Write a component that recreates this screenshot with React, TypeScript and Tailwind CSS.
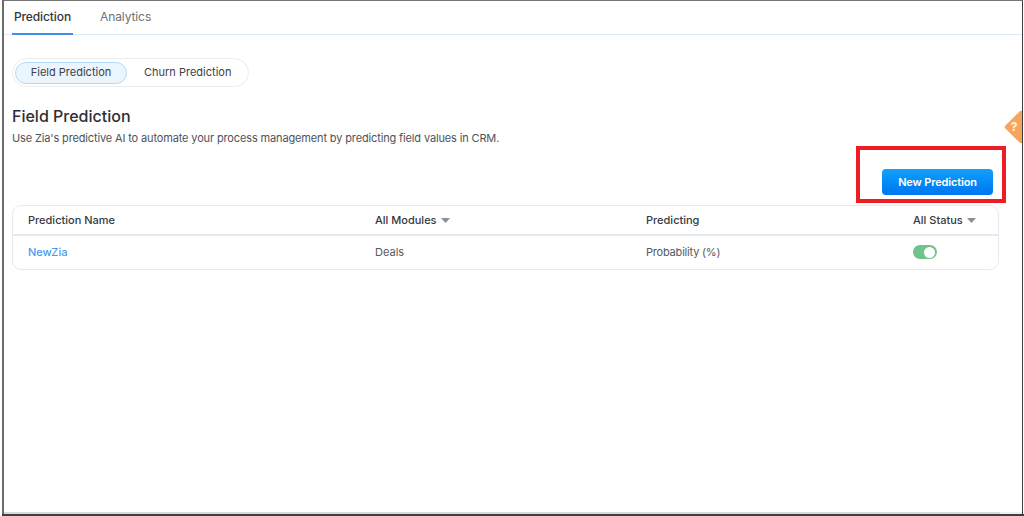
import React from "react";

function Caret() {
  return (
    <svg width="9" height="5" viewBox="0 0 9 5" className="ml-[4px]">
      <path d="M0 0h9L4.5 5z" fill="#8d8f94" />
    </svg>
  );
}

export default function App() {
  return (
    <div className="relative h-[516px] w-[1024px] overflow-hidden bg-white font-['Inter','Liberation_Sans',sans-serif]">
      <div className="ml-[2px] mr-[1px] flex h-[514px] flex-col border-l-2 border-r border-t border-l-[#6b6b6b] border-r-[#3c3c3c] border-t-[#777777]">
        <div className="flex h-[34px] items-stretch gap-[4px] border-b border-[#dfeaf5] pl-[8px] text-[12px] tracking-[-0.1px]">
          <div className="-mb-px flex w-[61px] items-center justify-center border-b-2 border-[#3f8fe8] font-medium text-[#333840]">
            Prediction
          </div>
          <div className="flex items-center pb-[2px] pl-[23px] text-[#6d7179]">Analytics</div>
        </div>

        <div className="flex flex-1 flex-col pl-[8px] pr-[23px] pt-[23px]">
          <div className="flex h-[29px] w-[237px] items-center rounded-full border border-[#e8edf3] pl-[2px] text-[11px] text-[#3c4048]">
            <div className="flex h-[22px] w-[112px] items-center justify-center rounded-full border border-[#b5daf7] bg-[#ebf5fe]">
              Field Prediction
            </div>
            <div className="ml-[17px]">Churn Prediction</div>
          </div>

          <h1 className="mt-[19px] text-[16px] font-medium leading-[20px] text-[#2c2f36]">Field Prediction</h1>
          <p className="mt-[4px] text-[11px] leading-[16px] tracking-[-0.14px] text-[#4e5259]">
            Use Zia's predictive AI to automate your process management by predicting field values in CRM.
          </p>

          <div className="mr-[6px] mt-[23px] flex justify-end">
            <button className="h-[26px] w-[111px] rounded-[4px] bg-gradient-to-b from-[#14a0fb] to-[#0075f0] text-[11px] font-semibold tracking-[-0.15px] text-white">
              New Prediction
            </button>
          </div>

          <div className="mt-[10px] rounded-[9px] border border-[#e6ebf1] text-[11px]">
            <div className="flex h-[30px] items-center border-b-2 border-[#e2eaf2] font-medium text-[#363a42]">
              <div className="w-[362px] pl-[15px]">Prediction Name</div>
              <div className="flex w-[271px] items-center">All Modules<Caret /></div>
              <div className="w-[267px]">Predicting</div>
              <div className="flex items-center">All Status<Caret /></div>
            </div>
            <div className="flex h-[33px] items-center pb-[1px] text-[#555960]">
              <div className="w-[362px] pl-[15px] font-medium text-[#4a9bf0]">NewZia</div>
              <div className="w-[271px]">Deals</div>
              <div className="w-[267px] tracking-[-0.2px]">Probability (%)</div>
              <div className="flex h-[14px] w-[24px] items-center justify-end rounded-full bg-[#6fc48b] pr-[2px]">
                <div className="h-[11px] w-[11px] rounded-full bg-white" />
              </div>
            </div>
          </div>
        </div>
        <div className="flex h-[2px]">
          <div className="flex-1 bg-[#d9d9d9]" />
          <div className="w-[22px] bg-[#efefef]" />
        </div>
      </div>

      <div className="ml-[2px] h-[2px] bg-[#3f3f3f]" />

      <div className="absolute right-[2px] top-[110px] h-[34px] w-[20px] overflow-hidden">
        <div className="absolute left-[7px] top-[5px] h-[24px] w-[24px] rotate-45 rounded-[2px] bg-[#f6a65c]" />
        <span className="absolute left-[5px] top-[9px] w-[14px] text-center text-[12px] font-bold leading-[16px] text-[#fff4e6]">?</span>
      </div>

      <div className="absolute left-[856px] top-[146px] h-[57px] w-[150px] border-[4px] border-[#ee1c25]" />
    </div>
  );
}
